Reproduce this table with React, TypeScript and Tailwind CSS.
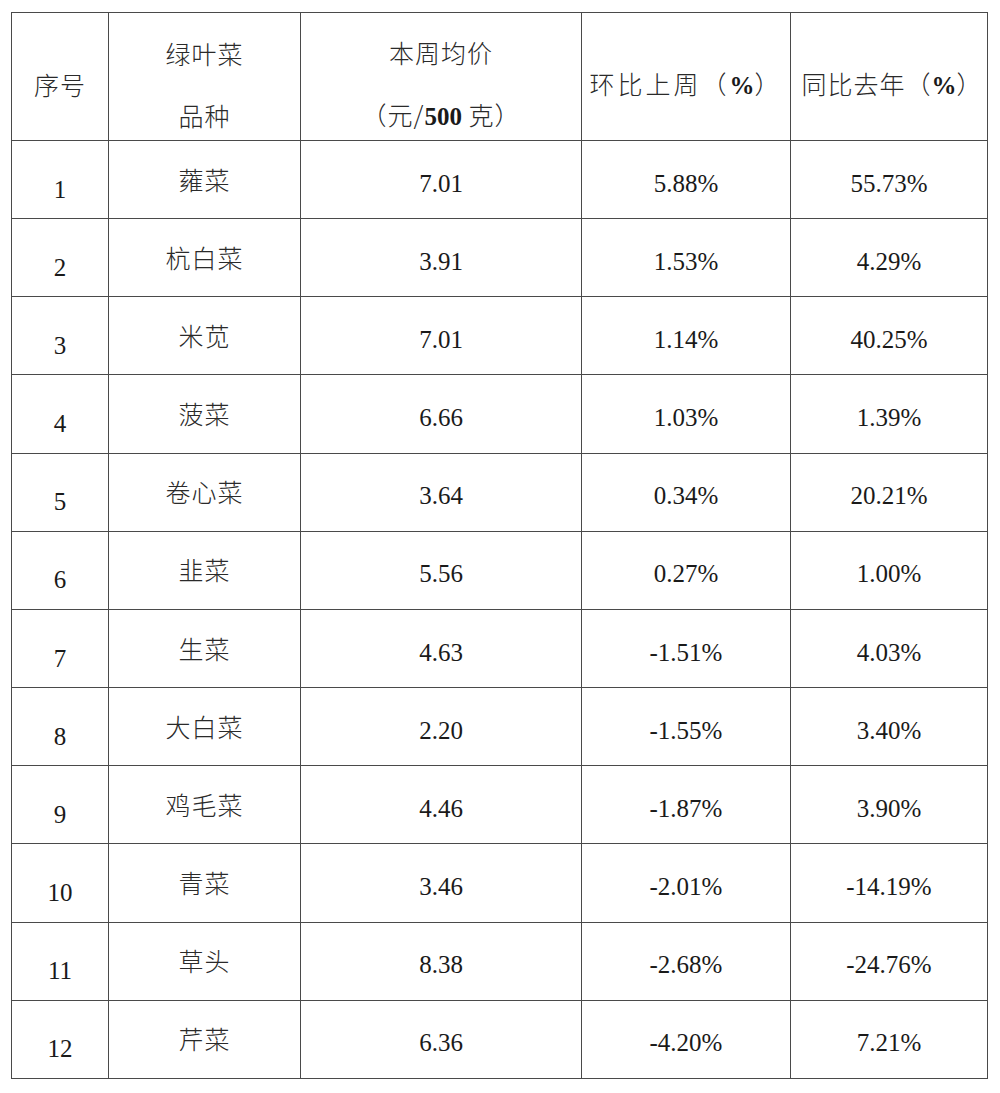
const rows: [string, string, string, string, string][] = [
  ["1", "蕹菜", "7.01", "5.88%", "55.73%"],
  ["2", "杭白菜", "3.91", "1.53%", "4.29%"],
  ["3", "米苋", "7.01", "1.14%", "40.25%"],
  ["4", "菠菜", "6.66", "1.03%", "1.39%"],
  ["5", "卷心菜", "3.64", "0.34%", "20.21%"],
  ["6", "韭菜", "5.56", "0.27%", "1.00%"],
  ["7", "生菜", "4.63", "-1.51%", "4.03%"],
  ["8", "大白菜", "2.20", "-1.55%", "3.40%"],
  ["9", "鸡毛菜", "4.46", "-1.87%", "3.90%"],
  ["10", "青菜", "3.46", "-2.01%", "-14.19%"],
  ["11", "草头", "8.38", "-2.68%", "-24.76%"],
  ["12", "芹菜", "6.36", "-4.20%", "7.21%"],
]

const cjk = "font-['Noto_Sans_CJK_SC',sans-serif] font-light text-[#2a2a2a] tracking-[1px]"
const num = "font-['Liberation_Serif','Noto_Sans_CJK_SC',serif] text-[#1a1a1a] tracking-normal"
const cell = "border border-[#4a4a4a] p-0 text-center align-middle"

export default function App() {
  return (
    <div className="min-h-[1093px] w-[1000px] bg-white pl-[11px] pt-[12px]">
      <table className="table-fixed border-collapse text-[25px] leading-none">
        <colgroup>
          <col className="w-[97px]" />
          <col className="w-[192px]" />
          <col className="w-[281px]" />
          <col className="w-[209px]" />
          <col className="w-[197px]" />
        </colgroup>
        <thead>
          <tr className="h-[128px]">
            <th className={`${cell} pt-[16px] font-normal`}>
              <span className={cjk}>序号</span>
            </th>
            <th className={`${cell} pt-[16px] font-normal`}>
              <div className={`${cjk} flex flex-col items-center gap-[37px]`}>
                <span>绿叶菜</span>
                <span>品种</span>
              </div>
            </th>
            <th className={`${cell} pt-[16px] font-normal`}>
              <div className="flex flex-col items-center gap-[37px]">
                <span className={cjk}>本周均价</span>
                <span className={cjk}>
                  （元/<b className={`${num} font-bold`}>500</b> 克）
                </span>
              </div>
            </th>
            <th className={`${cell} pt-[16px] font-normal`}>
              <span className={`${cjk} tracking-[3px]`}>
                环比上周（<b className={`${num} font-bold`}>%</b>）
              </span>
            </th>
            <th className={`${cell} pt-[16px] pl-[6px] font-normal`}>
              <span className={`${cjk} tracking-[1px]`}>
                同比去年（<b className={`${num} font-bold`}>%</b>）
              </span>
            </th>
          </tr>
        </thead>
        <tbody>
          {rows.map((r) => (
            <tr key={r[0]} className="h-[78.17px]">
              <td className={cell}>
                <span className={`${num} relative top-[9px]`}>{r[0]}</span>
              </td>
              <td className={cell}>
                <span className={`${cjk} relative top-[0px]`}>{r[1]}</span>
              </td>
              <td className={cell}>
                <span className={`${num} relative top-[3px]`}>{r[2]}</span>
              </td>
              <td className={cell}>
                <span className={`${num} relative top-[3px]`}>{r[3]}</span>
              </td>
              <td className={cell}>
                <span className={`${num} relative top-[3px]`}>{r[4]}</span>
              </td>
            </tr>
          ))}
        </tbody>
      </table>
    </div>
  )
}
